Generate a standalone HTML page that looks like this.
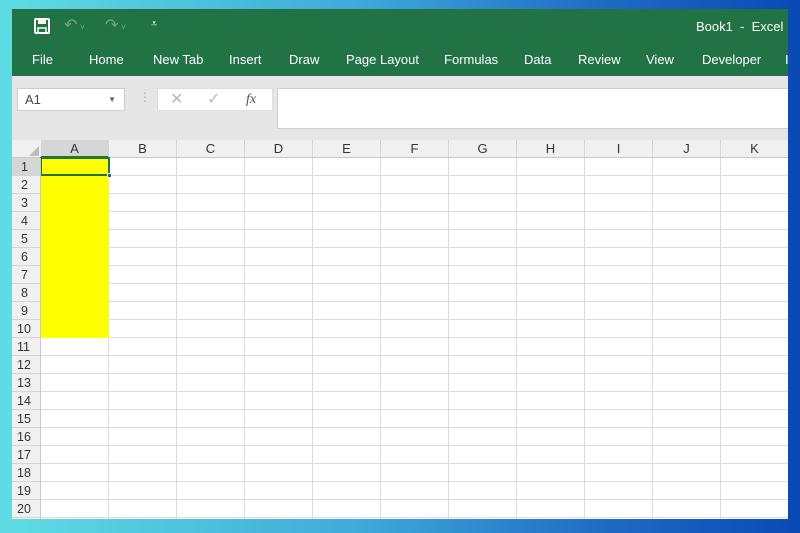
<!DOCTYPE html>
<html><head><style>
*{margin:0;padding:0;box-sizing:border-box}
body{width:800px;height:533px;overflow:hidden;position:relative;font-family:"Liberation Sans",sans-serif;background:linear-gradient(90deg,#5fdde3 0%,#3fa9da 45%,#1f6cc4 75%,#0a49b4 100%)}
.win{position:absolute;left:12px;top:9px;width:776px;height:510px;background:#fff;overflow:hidden}
.green{position:absolute;left:0;top:0;width:776px;height:67px;background:#217346;color:#fff}
.tab{position:absolute;top:43px;font-size:13px}
.gray{position:absolute;left:0;top:67px;width:776px;height:64px;background:#e6e6e6}
.abs{position:absolute}
.hdr{position:absolute;top:131px;left:0;width:776px;height:18px;background:#f0f0f0;border-bottom:1px solid #c8c8c8}
.col{position:absolute;top:0;height:18px;width:68px;text-align:center;font-size:13px;line-height:18px;color:#333;border-right:1px solid #d4d4d4}
.grid{position:absolute;left:29px;top:149px;width:747px;height:361px;
background-image:repeating-linear-gradient(180deg,transparent 0 17px,#dcdcdc 17px 18px),repeating-linear-gradient(90deg,transparent 0 67px,#dcdcdc 67px 68px)}
.rows{position:absolute;left:0;top:149px;width:29px;height:361px;background:#f0f0f0;border-right:1px solid #c8c8c8}
.rn{height:18px;border-bottom:1px solid #d4d4d4;font-size:12.5px;line-height:18px;padding-left:9px;color:#333}
</style></head><body>
<div class="win">
<div class="green">
<svg class="abs" style="left:22px;top:9px" width="16" height="16" viewBox="0 0 16 16"><rect x="1" y="1" width="14" height="14" rx="1" fill="none" stroke="#fff" stroke-width="2"/><rect x="4" y="1" width="8" height="5" fill="#fff"/><rect x="4" y="10" width="8" height="5" fill="none" stroke="#fff" stroke-width="1.5"/></svg>
<div class="abs" style="left:52px;top:6px;font-size:16px;color:#6fa98a">↶<span style="font-size:9px"> ˅</span></div>
<div class="abs" style="left:93px;top:6px;font-size:16px;color:#6fa98a">↷<span style="font-size:9px"> ˅</span></div>
<div class="abs" style="left:139px;top:9px;font-size:11px">⩡</div>
<div class="abs" style="left:684px;top:10px;font-size:13px">Book1 &nbsp;- &nbsp;Excel</div>
<div class="tab" style="left:20px">File</div>
<div class="tab" style="left:77px">Home</div>
<div class="tab" style="left:141px">New Tab</div>
<div class="tab" style="left:217px">Insert</div>
<div class="tab" style="left:277px">Draw</div>
<div class="tab" style="left:334px">Page Layout</div>
<div class="tab" style="left:432px">Formulas</div>
<div class="tab" style="left:512px">Data</div>
<div class="tab" style="left:566px">Review</div>
<div class="tab" style="left:634px">View</div>
<div class="tab" style="left:690px">Developer</div>
<div class="tab" style="left:773px">I</div>
</div>
<div class="gray">
<div class="abs" style="left:5px;top:12px;width:108px;height:23px;background:#fff;border:1px solid #ccc;font-size:13px;line-height:21px;padding-left:7px;color:#444">A1<span style="position:absolute;right:8px;font-size:8px;color:#666">▼</span></div>
<div class="abs" style="left:127px;top:14px;color:#aaa;font-size:12px">⋮</div>
<div class="abs" style="left:145px;top:12px;width:116px;height:23px;background:#fff;border:1px solid #ddd;color:#bbb;font-size:16px;line-height:21px"><span style="position:absolute;left:12px">✕</span><span style="position:absolute;left:49px">✓</span><span style="position:absolute;left:88px;color:#555;font-family:'Liberation Serif',serif;font-style:italic;font-size:14px">fx</span></div>
<div class="abs" style="left:265px;top:12px;width:515px;height:41px;background:#fff;border:1px solid #d0d0d0"></div>
</div>
<div class="hdr">
<svg class="abs" style="left:17px;top:6px" width="10" height="10"><polygon points="10,0 10,10 0,10" fill="#bbb"/></svg>
<div class="col" style="left:29px;background:#d6d6d6;border-bottom:2px solid #217346">A</div>
<div class="col" style="left:97px">B</div><div class="col" style="left:165px">C</div><div class="col" style="left:233px">D</div><div class="col" style="left:301px">E</div><div class="col" style="left:369px">F</div><div class="col" style="left:437px">G</div><div class="col" style="left:505px">H</div><div class="col" style="left:573px">I</div><div class="col" style="left:641px">J</div><div class="col" style="left:709px">K</div>
</div>
<div class="grid"></div>
<div class="abs" style="left:29px;top:149px;width:68px;height:180px;background:#ffff00"></div>
<div class="abs" style="left:28px;top:148px;width:70px;height:19px;border:2px solid #217346"></div>
<div class="abs" style="left:95px;top:164px;width:5px;height:5px;background:#217346;border:1px solid #fff"></div>
<div class="rows">
<div class="rn" style="background:#d6d6d6">1</div><div class="rn">2</div><div class="rn">3</div><div class="rn">4</div><div class="rn">5</div><div class="rn">6</div><div class="rn">7</div><div class="rn">8</div><div class="rn">9</div><div class="rn" style="padding-left:5px">10</div><div class="rn" style="padding-left:5px">11</div><div class="rn" style="padding-left:5px">12</div><div class="rn" style="padding-left:5px">13</div><div class="rn" style="padding-left:5px">14</div><div class="rn" style="padding-left:5px">15</div><div class="rn" style="padding-left:5px">16</div><div class="rn" style="padding-left:5px">17</div><div class="rn" style="padding-left:5px">18</div><div class="rn" style="padding-left:5px">19</div><div class="rn" style="padding-left:5px">20</div>
</div>
</div>
</body></html>
